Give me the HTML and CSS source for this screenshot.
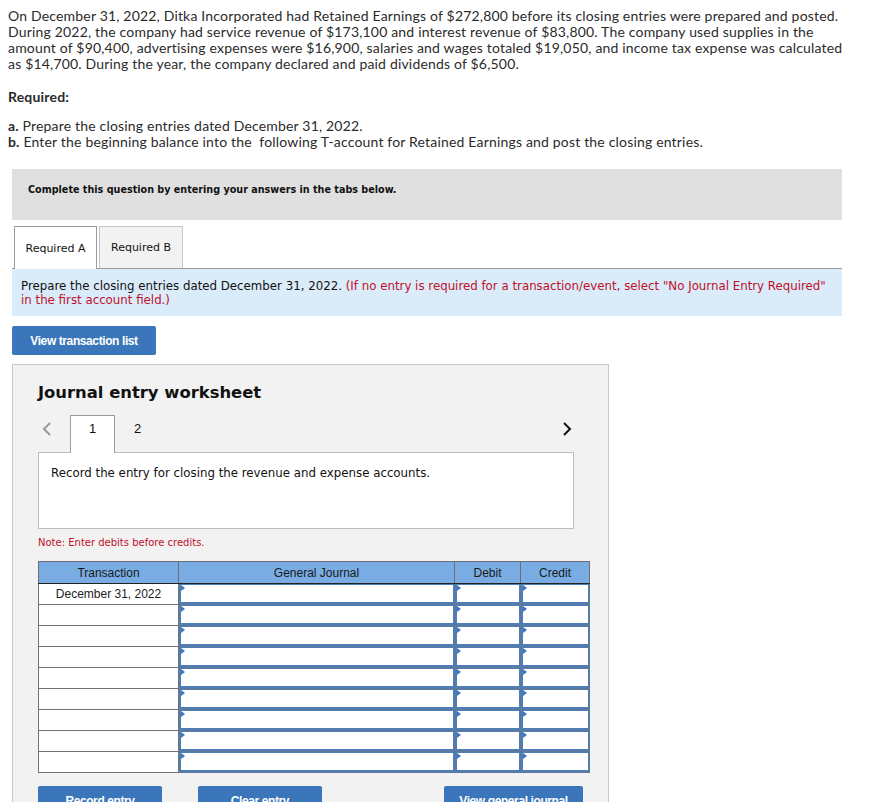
FILE: index.html
```html
<!DOCTYPE html>
<html>
<head>
<meta charset="utf-8">
<link rel="stylesheet" href="styles.css">
</head>
<body>
<div class="page">
  <p class="intro">On December 31, 2022, Ditka Incorporated had Retained Earnings of $272,800 before its closing entries were prepared and posted.<br>During 2022, the company had service revenue of $173,100 and interest revenue of $83,800. The company used supplies in the<br>amount of $90,400, advertising expenses were $16,900, salaries and wages totaled $19,050, and income tax expense was calculated<br>as $14,700. During the year, the company declared and paid dividends of $6,500.</p>
  <p class="req-title">Required:</p>
  <p class="steps"><b>a.</b> Prepare the closing entries dated December 31, 2022.<br><b>b.</b> Enter the beginning balance into the&nbsp; following T-account for Retained Earnings and post the closing entries.</p>

  <div class="question-box">Complete this question by entering your answers in the tabs below.</div>

  <div class="tabs">
    <div class="tab tab-active">Required A</div>
    <div class="tab">Required B</div>
  </div>
  <div class="instructions">Prepare the closing entries dated December 31, 2022. <span class="red">(If no entry is required for a transaction/event, select "No Journal Entry Required"<br>in the first account field.)</span></div>

  <button class="btn btn-list">View transaction list</button>

  <div class="worksheet">
    <h2 class="ws-title">Journal entry worksheet</h2>
    <div class="ws-nav">
      <span class="arrow arrow-left">
        <svg width="10" height="14" viewBox="0 0 10 14"><path d="M8 1 L2 7 L8 13" fill="none" stroke="#9a9a9a" stroke-width="2"/></svg>
      </span>
      <div class="ws-tab ws-tab-active">1</div>
      <div class="ws-tab">2</div>
      <span class="nav-spacer"></span>
      <span class="arrow arrow-right">
        <svg width="10" height="14" viewBox="0 0 10 14"><path d="M2 1 L8 7 L2 13" fill="none" stroke="#111" stroke-width="2"/></svg>
      </span>
    </div>
    <div class="ws-content">Record the entry for closing the revenue and expense accounts.</div>
    <p class="note">Note: Enter debits before credits.</p>

    <table class="journal">
      <colgroup>
        <col class="c-trans"><col class="c-gj"><col class="c-debit"><col class="c-credit">
      </colgroup>
      <thead>
        <tr><th>Transaction</th><th>General Journal</th><th>Debit</th><th>Credit</th></tr>
      </thead>
      <tbody>
        <tr><td class="date">December 31, 2022</td><td class="in"><div class="field"></div></td><td class="in"><div class="field"></div></td><td class="in"><div class="field"></div></td></tr>
        <tr><td class="date"></td><td class="in"><div class="field"></div></td><td class="in"><div class="field"></div></td><td class="in"><div class="field"></div></td></tr>
        <tr><td class="date"></td><td class="in"><div class="field"></div></td><td class="in"><div class="field"></div></td><td class="in"><div class="field"></div></td></tr>
        <tr><td class="date"></td><td class="in"><div class="field"></div></td><td class="in"><div class="field"></div></td><td class="in"><div class="field"></div></td></tr>
        <tr><td class="date"></td><td class="in"><div class="field"></div></td><td class="in"><div class="field"></div></td><td class="in"><div class="field"></div></td></tr>
        <tr><td class="date"></td><td class="in"><div class="field"></div></td><td class="in"><div class="field"></div></td><td class="in"><div class="field"></div></td></tr>
        <tr><td class="date"></td><td class="in"><div class="field"></div></td><td class="in"><div class="field"></div></td><td class="in"><div class="field"></div></td></tr>
        <tr><td class="date"></td><td class="in"><div class="field"></div></td><td class="in"><div class="field"></div></td><td class="in"><div class="field"></div></td></tr>
        <tr><td class="date"></td><td class="in"><div class="field"></div></td><td class="in"><div class="field"></div></td><td class="in"><div class="field"></div></td></tr>
      </tbody>
    </table>

    <div class="ws-buttons">
      <button class="btn btn-record">Record entry</button>
      <button class="btn btn-clear">Clear entry</button>
      <span class="nav-spacer"></span>
      <button class="btn btn-view">View general journal</button>
    </div>
  </div>
</div>
</body>
</html>
```
FILE: styles.css
```css
html, body {
  margin: 0;
  padding: 0;
  background: #fff;
}
body {
  padding: 8px 8px 0 8px;
}
.page {
  height: 794px;
  overflow: hidden;
  color: #2b2b2b;
}
.intro, .req-title, .steps {
  font-family: Lato, "Open Sans", sans-serif;
  font-size: 14px;
  letter-spacing: 0.18px;
  line-height: 16px;
  margin: 0;
}
.req-title {
  margin-top: 17px;
  font-weight: bold;
}
.steps {
  margin-top: 13px;
}
.question-box {
  margin: 19px 0 0 4px;
  width: 830px;
  height: 51px;
  box-sizing: border-box;
  background: #e0e0e0;
  padding: 14px 0 0 16px;
  font-family: "DejaVu Sans Condensed", "DejaVu Sans", sans-serif;
  font-weight: bold;
  font-size: 10.7px;
  line-height: 14px;
  color: #111;
}
.tabs {
  display: flex;
  margin: 6px 0 0 4px;
  width: 830px;
  padding-left: 2px;
  box-sizing: border-box;
  border-bottom: 1px solid #9c9c9c;
}
.tab {
  height: 42px;
  box-sizing: border-box;
  padding: 0;
  display: flex;
  align-items: center;
  justify-content: center;
  font-family: "DejaVu Sans", sans-serif;
  font-size: 11px;
  color: #111;
  background: #f2f2f2;
  border: 1px solid #c6c6c6;
  border-bottom: none;
  margin-right: 2px;
  width: 84px;
}
.tab-active {
  background: #fff;
  border-color: #9c9c9c;
  height: 43px;
  margin-bottom: -1px;
  width: 83px;
}
.instructions {
  margin-left: 4px;
  width: 830px;
  box-sizing: border-box;
  background: #daebf9;
  padding: 10px 9px 0 9px;
  height: 47px;
  font-family: "DejaVu Sans", sans-serif;
  font-size: 11.8px;
  line-height: 14px;
  color: #111;
}
.red {
  color: #c0102a;
}
.btn {
  display: block;
  border: none;
  border-radius: 2px;
  background: #3a76b9;
  color: #fff;
  font-family: "Liberation Sans", Arial, sans-serif;
  font-weight: bold;
  font-size: 12px;
  letter-spacing: -0.4px;
  padding: 0;
  height: 29px;
}
.btn-list {
  margin: 10px 0 0 4px;
  width: 144px;
}
.worksheet {
  margin: 9px 0 0 4px;
  width: 597px;
  box-sizing: border-box;
  background: #f2f2f2;
  border: 1px solid #c8c8c8;
  padding: 17px 20px 0 25px;
  height: 500px;
}
.ws-title {
  margin: 0;
  font-family: "DejaVu Sans", sans-serif;
  font-weight: bold;
  font-size: 16.4px;
  line-height: 22px;
  color: #111;
}
.ws-nav {
  display: flex;
  align-items: flex-start;
  margin-top: 11px;
  height: 37px;
  width: 536px;
}
.arrow {
  display: flex;
  align-items: center;
  height: 27px;
}
.arrow-left {
  width: 32px;
  padding-left: 4px;
  box-sizing: border-box;
}
.ws-tab {
  width: 45px;
  height: 37px;
  box-sizing: border-box;
  display: flex;
  align-items: flex-start;
  justify-content: center;
  padding-top: 6px;
  font-family: "Liberation Sans", Arial, sans-serif;
  font-size: 13px;
  line-height: 15px;
  color: #111;
}
.ws-tab-active {
  background: #fff;
  border: 1px solid #9c9c9c;
  border-bottom: none;
  height: 38px;
  margin-bottom: -1px;
  padding-top: 5px;
  position: relative;
  z-index: 1;
}
.nav-spacer {
  flex: 1;
}
.arrow-right {
  padding-right: 2px;
}
.ws-content {
  width: 536px;
  height: 77px;
  box-sizing: border-box;
  background: #fff;
  border: 1px solid #bdbdbd;
  padding: 13px 12px;
  font-family: "DejaVu Sans", sans-serif;
  font-size: 11.8px;
  line-height: 14px;
  color: #111;
}
.note {
  margin: 8px 0 0 0;
  font-family: "DejaVu Sans", sans-serif;
  font-size: 10px;
  line-height: 12px;
  color: #c0102a;
}
.journal {
  margin-top: 12px;
  border-collapse: collapse;
  table-layout: fixed;
  width: 551px;
  font-family: "Liberation Sans", Arial, sans-serif;
  font-size: 12px;
  color: #222;
}
.c-trans { width: 140px; }
.c-gj { width: 276px; }
.c-debit { width: 66px; }
.c-credit { width: 69px; }
.journal th {
  background: #78ace3;
  font-weight: normal;
  height: 21px;
  padding: 0;
  border: 1px solid #6f6f6f;
  border-left-color: #222;
  border-bottom-color: #222;
  color: #1a1a1a;
}
.journal th:first-child {
  border-left-color: #6f6f6f;
}
.journal td {
  height: 20px;
  padding: 0;
  border: 1px solid #727272;
}
.journal td.date {
  text-align: center;
  background: #fff;
}
.journal td.in {
  background: #fff;
  border-color: #5f7896;
}
.field {
  position: relative;
  height: 17px;
  border: 1px solid #4f7db5;
  border-width: 1px 1px 2px 2px;
  background: #fff;
}
.field::before {
  content: "";
  position: absolute;
  left: 0;
  top: 0;
  border-left: 4px solid #3a78c4;
  border-top: 3px solid transparent;
  border-bottom: 3px solid transparent;
}
.ws-buttons {
  display: flex;
  width: 545px;
  margin-top: 13px;
  gap: 36px;
}
.btn-record, .btn-clear {
  width: 124px;
}
.btn-view {
  width: 139px;
}
.ws-buttons .nav-spacer {
  flex: 1;
}
```
